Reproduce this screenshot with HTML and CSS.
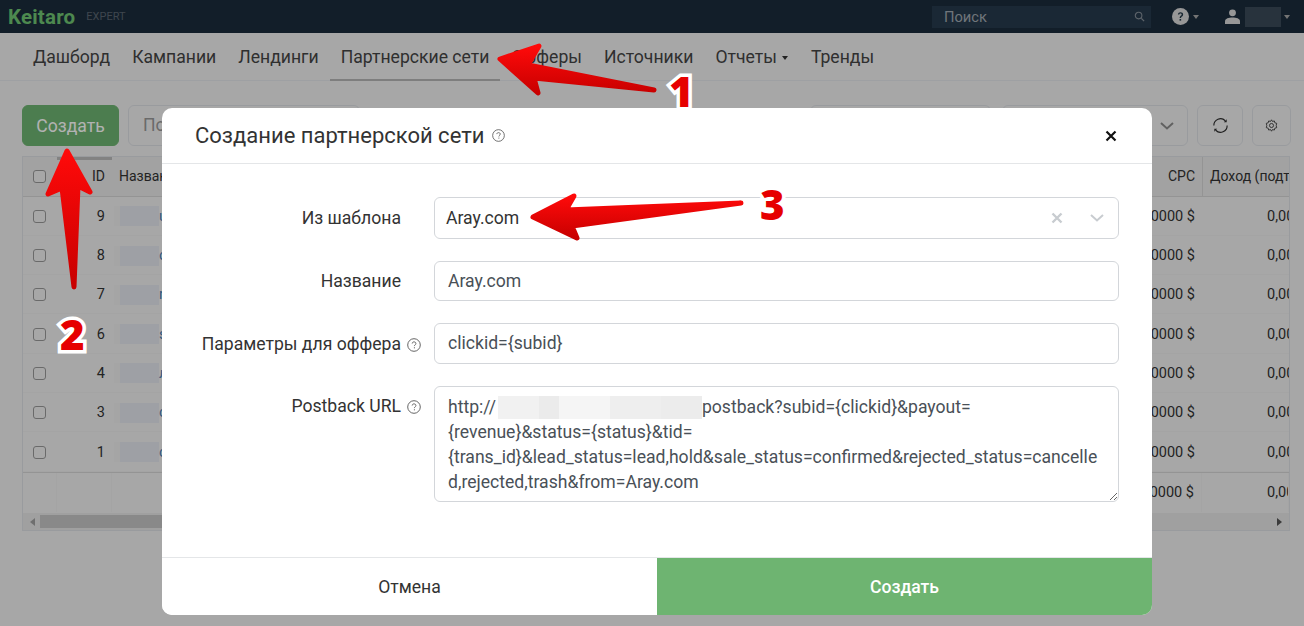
FILE: index.html
```html
<!DOCTYPE html>
<html lang="ru">
<head>
<meta charset="utf-8">
<title>Keitaro</title>
<link rel="stylesheet" href="styles.css">
</head>
<body>
<div class="page">
  <header class="topbar">
    <span class="logo">Keitaro</span>
    <span class="edition">EXPERT</span>
    <div class="topsearch">
      <span>Поиск</span>
      <svg class="ic-search" viewBox="0 0 12 12" width="11" height="11"><circle cx="5" cy="5" r="3.6" fill="none" stroke="#87909a" stroke-width="1.2"/><path d="M8 8l3 3" stroke="#87909a" stroke-width="1.4"/></svg>
    </div>
    <svg class="ic-help" viewBox="0 0 16 16" width="17" height="17"><circle cx="8" cy="8" r="8" fill="#a6a6a6"/><path d="M5.6 6.2C5.7 4.7 6.8 4 8 4c1.400 0 2.500.8 2.500 2.100 0 1.900-2 1.800-2 3.400H7.200c0-2.300 1.900-2.200 1.900-3.400 0-.6-.5-1-1.100-1-.7 0-1.100.4-1.200 1.100z" fill="#1a2a36"/><rect x="7.100" y="10.400" width="1.500" height="1.500" fill="#1a2a36"/></svg>
    <span class="caret"></span>
    <svg class="ic-user" viewBox="0 0 14 14" width="15" height="15"><circle cx="7" cy="3.600" r="3.200" fill="#a6a6a6"/><path d="M0 14v-2.500C0 9 3.500 8 7 8s7 1 7 3.500V14z" fill="#a6a6a6"/></svg>
    <span class="userblur"></span>
    <span class="caret"></span>
  </header>

  <nav class="mainnav">
    <a class="navitem">Дашборд</a>
    <a class="navitem">Кампании</a>
    <a class="navitem">Лендинги</a>
    <a class="navitem active">Партнерские сети</a>
    <a class="navitem">Офферы</a>
    <a class="navitem">Источники</a>
    <a class="navitem">Отчеты<span class="caret dark"></span></a>
    <a class="navitem">Тренды</a>
  </nav>

  <div class="toolbar">
    <button class="btn-create">Создать</button>
    <div class="tool-input">По</div>
    <div class="tool-spacer"></div>
    <div class="tool-box w-date"></div>
    <div class="tool-box w-select">
      <svg viewBox="0 0 14 8" width="14" height="8"><path d="M1 1l6 5.500L13 1" fill="none" stroke="#8c8c8c" stroke-width="2"/></svg>
    </div>
    <div class="tool-box w-icon">
      <svg viewBox="0 0 20 20" width="19" height="19"><path d="M3 10a7 7 0 0 1 12-5M17 10a7 7 0 0 1-12 5" fill="none" stroke="#2c2c2c" stroke-width="1.200"/><path d="M13.500 6.500h3v-3zM6.500 13.500h-3v3z" fill="#2c2c2c"/></svg>
    </div>
    <div class="tool-box w-gear">
      <svg viewBox="0 0 16 16" width="13" height="13"><circle cx="8" cy="8" r="2.500" fill="none" stroke="#2c2c2c"/><path d="M8 1l1.200 2 2.300-.6.600 2.300 2.300.6L13.800 8l.6 2.700-2.300.6-.6 2.300-2.300-.6L8 15l-1.200-2-2.300.6-.6-2.300-2.300-.6L2.200 8l-.6-2.700 2.300-.6.600-2.300 2.300.6z" fill="none" stroke="#2c2c2c"/></svg>
    </div>
  </div>

  <section class="grid">
    <div class="gridrow gridhead">
      <div class="cell"><span class="check"></span></div>
      <div class="cell right idhead">ID</div>
      <div class="cell">Название</div>
      <div class="cell right">CPC</div>
      <div class="cell income">Доход (подтв.)</div>
    </div>
    <div class="gridrow"><div class="cell"><span class="check"></span></div><div class="cell right">9</div><div class="cell"><span class="namecell"></span><span class="link">u</span></div><div class="cell right">0,0000 $</div><div class="cell incomeval">0,00 $</div></div>
    <div class="gridrow"><div class="cell"><span class="check"></span></div><div class="cell right">8</div><div class="cell"><span class="namecell"></span><span class="link">o</span></div><div class="cell right">0,0000 $</div><div class="cell incomeval">0,00 $</div></div>
    <div class="gridrow"><div class="cell"><span class="check"></span></div><div class="cell right">7</div><div class="cell"><span class="namecell"></span><span class="link">r</span></div><div class="cell right">0,0000 $</div><div class="cell incomeval">0,00 $</div></div>
    <div class="gridrow"><div class="cell"><span class="check"></span></div><div class="cell right">6</div><div class="cell"><span class="namecell"></span><span class="link">s</span></div><div class="cell right">0,0000 $</div><div class="cell incomeval">0,00 $</div></div>
    <div class="gridrow"><div class="cell"><span class="check"></span></div><div class="cell right">4</div><div class="cell"><span class="namecell"></span><span class="link">л</span></div><div class="cell right">0,0000 $</div><div class="cell incomeval">0,00 $</div></div>
    <div class="gridrow"><div class="cell"><span class="check"></span></div><div class="cell right">3</div><div class="cell"><span class="namecell"></span><span class="link">c</span></div><div class="cell right">0,0000 $</div><div class="cell incomeval">0,00 $</div></div>
    <div class="gridrow"><div class="cell"><span class="check"></span></div><div class="cell right">1</div><div class="cell"><span class="namecell"></span><span class="link">c</span></div><div class="cell right">0,0000 $</div><div class="cell incomeval">0,00 $</div></div>
    <div class="gridrow gridtotal"><div class="cell"></div><div class="cell"></div><div class="cell"></div><div class="cell right">0,0000 $</div><div class="cell incomeval">0,00 $</div></div>
    <div class="hscroll">
      <span class="tri left"></span>
      <span class="thumb"></span>
      <span class="tri rightward"></span>
    </div>
  </section>
</div>

<div class="overlay">
  <div class="modal">
    <div class="modal-head">
      <h2>Создание партнерской сети</h2>
      <svg class="hint title-hint" viewBox="0 0 14 14" width="13" height="13"><use href="#hint"/></svg>
      <span class="close">
        <svg viewBox="0 0 12 12" width="12" height="12"><path d="M1.500 1.500l9 9M10.500 1.500l-9 9" stroke="#111" stroke-width="2.200"/></svg>
      </span>
    </div>
    <div class="modal-body">
      <div class="formrow first">
        <label class="flabel">Из шаблона</label>
        <div class="field select">
          <span class="select-value">Aray.com</span>
          <svg class="x" viewBox="0 0 12 12" width="12" height="12"><path d="M1.500 1.500l9 9M10.500 1.500l-9 9" stroke="#c8ccd0" stroke-width="2.400"/></svg>
          <svg class="chev" viewBox="0 0 14 8" width="14" height="8"><path d="M1 1l6 5.500L13 1" fill="none" stroke="#c8ccd0" stroke-width="2"/></svg>
        </div>
      </div>
      <div class="formrow">
        <label class="flabel">Название</label>
        <div class="field short">Aray.com</div>
      </div>
      <div class="formrow">
        <label class="flabel">Параметры для оффера<svg class="hint label-hint" viewBox="0 0 14 14" width="14" height="14"><use href="#hint"/></svg></label>
        <div class="field">clickid={subid}</div>
      </div>
      <div class="formrow top">
        <label class="flabel">Postback URL<svg class="hint label-hint" viewBox="0 0 14 14" width="14" height="14"><use href="#hint"/></svg></label>
        <div class="field area">http://<span class="blurred"></span>postback?subid={clickid}&amp;payout={revenue}&amp;status={status}&amp;tid={trans_id}&amp;lead_status=lead,hold&amp;sale_status=confirmed&amp;rejected_status=cancelled,rejected,trash&amp;from=Aray.com</div>
      </div>
    </div>
    <div class="modal-foot">
      <button class="foot-btn cancel">Отмена</button>
      <button class="foot-btn submit">Создать</button>
    </div>
  </div>
</div>

<svg class="defs" width="0" height="0">
  <defs>
    <symbol id="hint" viewBox="0 0 14 14">
      <circle cx="7" cy="7" r="6.300" fill="none" stroke="#555" stroke-width=".9"/>
      <path d="M5.200 5.500C5.300 4.400 6 3.900 7 3.900c1.100 0 1.900.6 1.900 1.600 0 1.400-1.500 1.300-1.500 2.600" fill="none" stroke="#555" stroke-width=".9"/>
      <rect x="6.900" y="9.300" width="1" height="1" fill="#555"/>
    </symbol>
    <linearGradient id="red" x1="0" y1="0" x2="0" y2="1">
      <stop offset="0" stop-color="#ff0a0a"/>
      <stop offset="1" stop-color="#c80000"/>
    </linearGradient>
  </defs>
</svg>

<svg class="arrows" viewBox="0 0 1304 626" width="1304" height="626">
  <path class="arrow" d="M500 59L539 46L528 65L654 90L534 78L538 93Z"/>
  <path class="arrow" d="M67 151L90 192L78 186L74 287L62 188L48 194Z"/>
  <path class="arrow" d="M533 217L574 196L566 210L741 203L572 226L577 238Z"/>
</svg>
<span class="mark m1">1</span>
<span class="mark m2">2</span>
<span class="mark m3">3</span>
</body>
</html>
```
FILE: styles.css
```css
* { box-sizing: border-box; }
html, body { margin: 0; height: 626px; overflow: hidden; }
body { font-family: Roboto, "Liberation Sans", sans-serif; font-size: 16px; color: #333; background: #f0f0f0; position: relative; }
.page { display: flex; flex-direction: column; height: 626px; }

.topbar { height: 33px; background: #1a2c3c; display: flex; align-items: center; padding-left: 8px; flex: none; }
.logo { font-weight: 700; font-size: 20.500px; color: #6fc472; letter-spacing: .2px; }
.edition { font-size: 11px; color: #5a6570; margin-left: 11px; margin-right: auto; }
.topsearch { width: 219px; height: 22px; background: #263a4c; color: #a0a8b0; font-size: 14.700px; display: flex; align-items: center; justify-content: space-between; padding: 0 6px 0 12px; }
.ic-help { margin-left: 21px; }
.ic-user { margin-left: 26px; }
.ic-help, .ic-user { filter: brightness(1.3); }
.caret { display: inline-block; width: 0; height: 0; border: 3.500px solid transparent; border-top: 4px solid #a6a6a6; border-bottom: 0; margin-left: 4px; }
.caret.dark { border-top-color: #333; vertical-align: 3px; margin-left: 5px; margin-right: 1px; }
.userblur { width: 36px; height: 20px; margin-left: 5px; background: #3a4a58; }
.topbar .caret:last-child { margin-right: 14px; margin-left: 3px; }

.mainnav { height: 48px; border-bottom: 1px solid #e2e6ea; display: flex; align-items: stretch; padding-left: 22px; flex: none; }
.navitem { padding: 0 11px; font-size: 17.600px; line-height: 49px; color: #444; white-space: nowrap; position: relative; }
.navitem.active::after { content: ""; position: absolute; left: 0; right: 0; bottom: -1px; height: 2px; background: #b5b5b5; }

.toolbar { display: flex; align-items: stretch; gap: 9px; margin: 24px 13px 0 22px; height: 41px; flex: none; }
.btn-create { width: 97px; border: 1px solid #6eb471; background: #6eb471; color: #fff; border-radius: 6px; font: 400 17.600px Roboto, sans-serif; }
.tool-input { width: 232px; border: 1px solid #dcdfe3; border-radius: 6px; background: #f0f0f0; color: #999; font-size: 17.600px; line-height: 39px; padding-left: 14px; }
.tool-spacer { flex: 1; }
.tool-box { border: 1px solid #dcdfe3; border-radius: 6px; display: flex; align-items: center; justify-content: center; }
.w-date { width: 181px; margin-right: 2px; }
.w-select { width: 186px; justify-content: flex-end; padding-right: 13px; }
.w-icon { width: 46px; }
.w-gear { width: 39px; }

.grid { margin: 10px 14px 0 22px; border: 1px solid #dcdfe3; flex: none; height: 375px; position: relative; overflow: hidden; }
.gridrow { display: grid; grid-template-columns: 34px 55px 1fr 92px 87px; height: 39.300px; padding-top: 1px; border-bottom: 1px solid #ebebeb; font-size: 14.500px; }
.gridhead { background: #e8e8e8; height: 39.600px; padding-top: 0; border-bottom: 1px solid #d4d4d4; position: relative; font-size: 14px; }
.idhead::before { content: ""; position: absolute; left: 34px; top: 0; width: 55px; height: 3px; background: #bbb; }
.gridtotal { height: 40px; padding-top: 0; border-top: 1px solid #d4d4d4; border-bottom: 0; }
.gridtotal .cell { border-right: 1px solid #ebebeb; }
.cell { display: flex; align-items: center; padding: 0 7px; white-space: nowrap; overflow: hidden; min-width: 0; }
.cell.right { justify-content: flex-end; padding-right: 7px; }
.check { width: 13px; height: 13px; border: 1px solid #999; border-radius: 3px; background: #f0f0f0; margin-left: 3px; }
.namecell { width: 45px; height: 20px; background: linear-gradient(90deg, #ececec 6px, #e2e5ec 6px); flex: none; margin-left: -5px; }
.link { color: #4a7fb5; }
.income { border-left: 1px solid #d4d4d4; }
.incomeval { padding-left: 65px; overflow: hidden; }
.hscroll { position: absolute; left: 0; right: 0; bottom: 0; height: 17px; background: #e6e6e6; display: flex; align-items: center; padding: 0 4px; }
.thumb { position: absolute; left: 17px; right: 200px; top: 2px; bottom: 2px; background: #c4c4c4; }
.tri { width: 0; height: 0; border: 4px solid transparent; }
.tri.left { border-left: 0; border-right: 5px solid #a0a0a0; margin-left: 3px; }
.tri.rightward { border-right: 0; border-left: 5px solid #555; margin-left: auto; margin-right: 3px; }

.overlay { position: absolute; inset: 0; background: rgba(0, 0, 0, .3); }
.modal { position: absolute; left: 162px; top: 108px; width: 990px; height: 507px; background: #fff; border-radius: 10px; overflow: hidden; display: flex; flex-direction: column; }
.modal-head { height: 56px; flex: none; border-bottom: 1px solid #e4e6e8; display: flex; align-items: center; padding: 0 35px 0 33px; }
.modal-head h2 { margin: 0; font-size: 22px; font-weight: 400; color: #333; }
.hint { flex: none; vertical-align: -2px; }
.title-hint { margin-left: 8px; }
.label-hint { margin-left: 6px; margin-right: -20px; }
.close { margin-left: auto; display: flex; }
.modal-body { flex: 1; padding: 33px 33px 0 0; display: flex; flex-direction: column; gap: 22px; }
.formrow { display: grid; grid-template-columns: 239px 1fr; column-gap: 33px; align-items: center; }
.formrow.top { align-items: start; }
.formrow.top .flabel { padding-top: 10px; }
.flabel { text-align: right; font-size: 17.600px; color: #333; white-space: nowrap; }
.field { height: 41px; border: 1px solid #d3d6da; border-radius: 6px; padding: 0 13px; font-size: 17.600px; line-height: 39px; color: #495057; }
.field.short { height: 40px; line-height: 39px; }
.select { display: flex; align-items: center; height: 42px; padding: 0 14px 0 11px; color: #333; }
.select-value { margin-right: auto; }
.chev { margin-left: 27px; }
.area { height: 116px; line-height: 25px; padding: 8px 13px 4px; overflow: auto; resize: vertical; overflow-wrap: break-word; }
.blurred { display: inline-block; width: 204px; height: 23px; margin-left: 2px; vertical-align: -6px; background: linear-gradient(90deg, #f1f1f1 0 20%, #ebebeb 20% 30%, #f5f5f5 30% 55%, #eeeeee 55% 80%, #ececec 80% 100%); }
.modal-foot { height: 58px; flex: none; border-top: 1px solid #e4e6e8; display: flex; }
.foot-btn { flex: 1; border: 0; font: 400 17.600px Roboto, sans-serif; }
.cancel { background: #fff; color: #333; }
.submit { background: #6eb471; color: #fff; font-weight: 500; }

.defs { position: absolute; }
.arrows { position: absolute; left: 0; top: 0; pointer-events: none; }
.arrow { fill: url(#red); stroke: url(#red); stroke-width: 5; stroke-linejoin: round; }
.mark { position: absolute; font-family: "Open Sans", "Liberation Sans", sans-serif; font-weight: 800; font-size: 42px; line-height: 42px; color: #e60000; -webkit-text-stroke: 7px #fff; paint-order: stroke fill; }
.m1 { left: 669px; top: 70px; }
.m2 { left: 60px; top: 313px; }
.m3 { left: 760px; top: 183px; }
```
